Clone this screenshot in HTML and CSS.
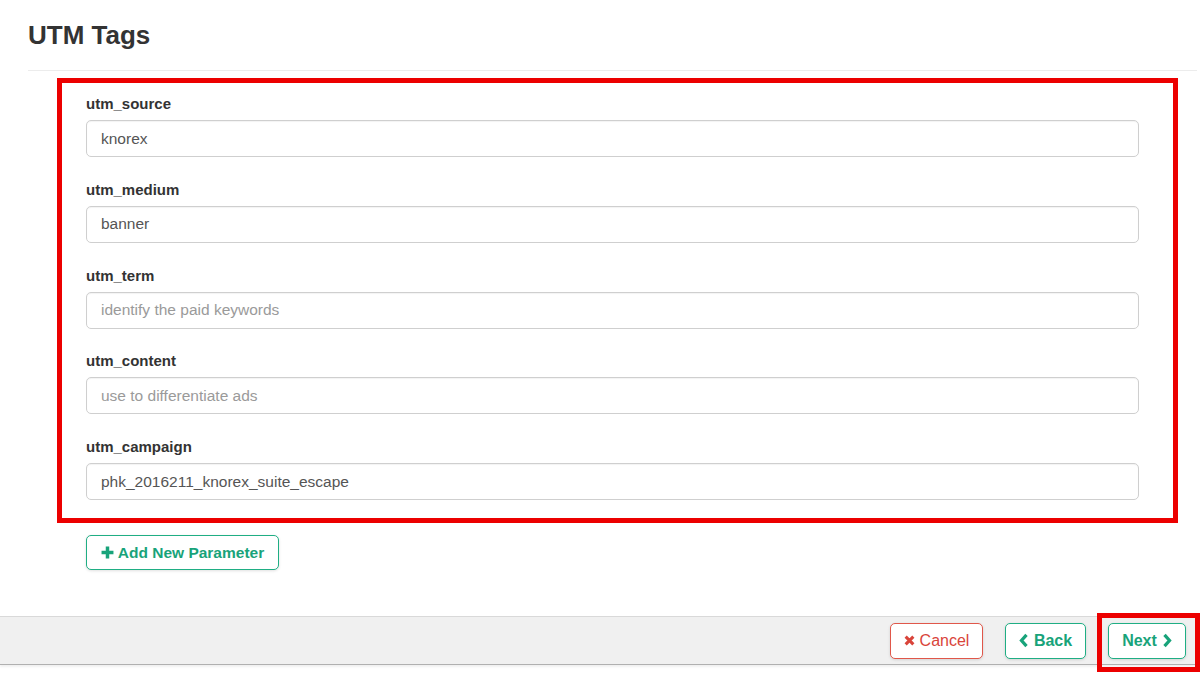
FILE: index.html
```html
<!DOCTYPE html>
<html>
<head>
<meta charset="utf-8">
<link rel="stylesheet" href="styles.css">
</head>
<body>
<div class="page">
  <div class="content">
    <h2 class="title">UTM Tags</h2>
    <hr class="rule">
    <div class="highlight-box">
      <div class="group">
        <label class="lbl">utm_source</label>
        <input class="field" type="text" value="knorex">
      </div>
      <div class="group">
        <label class="lbl">utm_medium</label>
        <input class="field" type="text" value="banner">
      </div>
      <div class="group">
        <label class="lbl">utm_term</label>
        <input class="field" type="text" placeholder="identify the paid keywords">
      </div>
      <div class="group">
        <label class="lbl">utm_content</label>
        <input class="field" type="text" placeholder="use to differentiate ads">
      </div>
      <div class="group">
        <label class="lbl">utm_campaign</label>
        <input class="field" type="text" value="phk_2016211_knorex_suite_escape">
      </div>
    </div>
    <button class="btn btn-green btn-add">
      <svg class="ico-plus" viewBox="0 0 12 12" width="13" height="13"><path d="M6 0.5v11M0.5 6h11" stroke="currentColor" stroke-width="3.2" fill="none"/></svg>
      Add New Parameter
    </button>
  </div>
  <div class="footer">
    <button class="btn btn-red btn-cancel">
      <svg class="ico-x" viewBox="0 0 10 10" width="11" height="11"><path d="M1.5 1.5l7 7M8.5 1.5l-7 7" stroke="currentColor" stroke-width="2.8" fill="none"/></svg>
      Cancel
    </button>
    <button class="btn btn-green btn-bold btn-back">
      <svg class="ico-chev" viewBox="0 0 8 12" width="10" height="15"><path d="M6 1.5L2 6l4 4.5" stroke="currentColor" stroke-width="2.6" fill="none"/></svg>
      Back
    </button>
    <span class="mark-wrap">
      <button class="btn btn-green btn-bold btn-next">
        Next
        <svg class="ico-chev" viewBox="0 0 8 12" width="10" height="15"><path d="M2 1.5L6 6l-4 4.5" stroke="currentColor" stroke-width="2.6" fill="none"/></svg>
      </button>
    </span>
  </div>
</div>
</body>
</html>
```

FILE: styles.css
```css
* { box-sizing: border-box; }
html, body { margin: 0; padding: 0; background: #fff; }
body {
  font-family: "Liberation Sans", Arial, Helvetica, sans-serif;
  color: #333;
  width: 1204px;
  height: 692px;
  overflow: hidden;
}
.content {
  padding: 20px 7px 0 28px;
}
.title {
  margin: 0;
  font-size: 26px;
  line-height: 30px;
  font-weight: 700;
  color: #333;
}
.rule {
  margin: 20px 0 0 0;
  border: 0;
  border-top: 1px solid #ececec;
  height: 0;
}
.highlight-box {
  margin: 7px 19px 0 29px;
  border: 5px solid #ec0000;
  padding: 11px 34px 18px 24px;
  display: flex;
  flex-direction: column;
  gap: 22.75px;
}
.group {
  display: flex;
  flex-direction: column;
}
.lbl {
  display: block;
  font-size: 15px;
  line-height: 20px;
  font-weight: 700;
  color: #333;
  margin-bottom: 6px;
}
.field {
  height: 37px;
  width: 100%;
  border: 1px solid #cfcfcf;
  border-radius: 5px;
  padding: 0 14px;
  font-family: "Liberation Sans", Arial, Helvetica, sans-serif;
  font-size: 15.5px;
  color: #555;
  background: #fff;
  box-shadow: inset 0 1px 1px rgba(0,0,0,0.05);
  outline: none;
}
.field::placeholder { color: #9a9a9a; }

.btn {
  font-family: "Liberation Sans", Arial, Helvetica, sans-serif;
  background: #fff;
  border-radius: 5px;
  height: 36px;
  padding: 0 10px;
  font-size: 16px;
  display: inline-flex;
  align-items: center;
  justify-content: center;
  gap: 5px;
  cursor: pointer;
  box-shadow: 0 1px 3px rgba(0,0,0,0.12);
}
.btn-green {
  border: 1px solid #1fae84;
  color: #18a37a;
}
.btn-bold { font-weight: 700; }
.btn-red {
  border: 1px solid #e0574a;
  color: #d9443a;
}
.btn-cancel { width: 93px; }
.btn-back { width: 81px; }
.btn-next { width: 78px; }
.btn-add {
  margin: 12px 0 0 58px;
  height: 35px;
  width: 193px;
  font-size: 15.5px;
  font-weight: 700;
  gap: 4px;
  padding: 0 12px;
}

.footer {
  margin: 46px 6px 0 0;
  height: 49px;
  background: #f0f0f0;
  border-top: 1px solid #d9d9d9;
  border-bottom: 1px solid #b0b0b0;
  box-shadow: 0 2px 2px rgba(0,0,0,0.06);
  display: flex;
  justify-content: flex-end;
  align-items: center;
  gap: 22px;
  padding: 0 12px 0 0;
}
.mark-wrap {
  position: relative;
  display: inline-flex;
}
.mark-wrap::after {
  content: "";
  position: absolute;
  left: -11px;
  top: -10px;
  right: -14px;
  bottom: -13px;
  border: 5px solid #ec0000;
  pointer-events: none;
}
```
